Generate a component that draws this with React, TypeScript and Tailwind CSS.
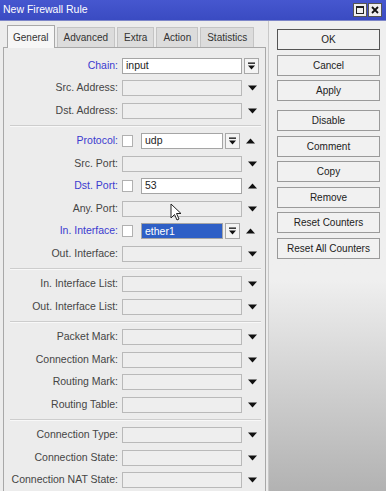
import React from 'react';

type Row = {
	label: string;
	blue?: boolean;
	check?: boolean;
	kind?: 'combo' | 'text' | 'empty' | 'chain';
	value?: string;
	selected?: boolean;
	up?: boolean;
};

const groups: Row[][] = [
	[
		{ label: 'Chain', blue: true, kind: 'chain', value: 'input' },
		{ label: 'Src. Address' },
		{ label: 'Dst. Address' },
	],
	[
		{ label: 'Protocol', blue: true, check: true, kind: 'combo', value: 'udp', up: true },
		{ label: 'Src. Port' },
		{ label: 'Dst. Port', blue: true, check: true, kind: 'text', value: '53', up: true },
		{ label: 'Any. Port' },
		{ label: 'In. Interface', blue: true, check: true, kind: 'combo', value: 'ether1', selected: true, up: true },
		{ label: 'Out. Interface' },
	],
	[{ label: 'In. Interface List' }, { label: 'Out. Interface List' }],
	[
		{ label: 'Packet Mark' },
		{ label: 'Connection Mark' },
		{ label: 'Routing Mark' },
		{ label: 'Routing Table' },
	],
	[{ label: 'Connection Type' }, { label: 'Connection State' }, { label: 'Connection NAT State' }],
];

const buttons = ['OK', 'Cancel', 'Apply', 'Disable', 'Comment', 'Copy', 'Remove', 'Reset Counters', 'Reset All Counters'];
const tabs = ['General', 'Advanced', 'Extra', 'Action', 'Statistics'];

const Arrow = ({ up }: { up?: boolean }) => (
	<svg width="9" height="6" viewBox="0 0 9 6" className="ml-[6px] shrink-0">
		{up ? <polygon points="0,5.5 9,5.5 4.5,0.5" fill="#111" /> : <polygon points="0,0.5 9,0.5 4.5,5.5" fill="#111" />}
	</svg>
);

const DropButton = ({ w }: { w: string }) => (
	<div className={`${w} h-4 ml-[2px] flex items-center justify-center border border-[#a8a8a8] bg-[#f4f4f4]`}>
		<svg width="7" height="8" viewBox="0 0 7 8">
			<rect x="0" y="0.5" width="7" height="1.3" fill="#111" />
			<polygon points="0,3.5 7,3.5 3.5,7.5" fill="#111" />
		</svg>
	</div>
);

const FieldRow = ({ row }: { row: Row }) => {
	const kind = row.kind ?? 'empty';
	return (
		<div className="flex items-center h-[22.5px]">
			<div className={`w-[114px] text-right text-[10.5px] whitespace-nowrap ${row.blue ? 'text-[#3b3bcf]' : 'text-[#454545]'}`}>
				{row.label}:
			</div>
			<div className="ml-[4px] flex items-center">
				{row.check && <div className="w-[11px] h-[12px] bg-white border border-[#b0b0b0] mr-[8px]" />}
				{kind === 'chain' && (
					<>
						<div className="w-[120px] h-4 bg-white border border-[#a5a5a5] flex items-center pl-[3px] text-[10.5px] text-[#222]">
							{row.value}
						</div>
						<DropButton w="w-[15px]" />
					</>
				)}
				{kind === 'combo' && (
					<>
						<div className="w-[82px] h-4 bg-white border border-[#a5a5a5] flex items-center text-[10.5px] text-[#222]">
							{row.selected ? (
								<div className="w-full h-full bg-[#2e5fc6] text-white pl-[3px] leading-[14px]">{row.value}</div>
							) : (
								<span className="pl-[3px]">{row.value}</span>
							)}
						</div>
						<DropButton w="w-[15px]" />
						<Arrow up />
					</>
				)}
				{kind === 'text' && (
					<>
						<div className="w-[101px] h-4 bg-white border border-[#a5a5a5] flex items-center pl-[3px] text-[10.5px] text-[#222]">
							{row.value}
						</div>
						<Arrow up />
					</>
				)}
				{kind === 'empty' && (
					<>
						<div className="w-[120px] h-4 bg-[#eeeeee] border border-[#b9b9b9]" />
						<Arrow />
					</>
				)}
			</div>
		</div>
	);
};

export default function App() {
	return (
		<div className="w-[386px] h-[491px] overflow-hidden flex flex-col bg-[#ececec] font-['Liberation_Sans',Arial,sans-serif]">
			{/* title bar */}
			<div className="h-[21px] shrink-0 flex items-center bg-linear-to-b from-[#4657cf] to-[#3a4bc2] border-b border-[#7d86c9]">
				<span className="pl-[3px] text-white text-[10.5px]">New Firewall Rule</span>
				<div className="ml-auto mr-[4px] flex gap-[1px]">
					<div className="w-[14px] h-[14px] bg-[#efefef] border border-[#555] flex items-center justify-center">
						<div className="w-[8px] h-[8px] border border-[#222] border-t-2" />
					</div>
					<div className="w-[14px] h-[14px] bg-[#efefef] border border-[#555] flex items-center justify-center">
						<svg width="8" height="8" viewBox="0 0 8 8">
							<path d="M1 1 L7 7 M7 1 L1 7" stroke="#111" strokeWidth="1.8" />
						</svg>
					</div>
				</div>
			</div>

			<div className="flex flex-1 relative">
				{/* left: tabs + panel */}
				<div className="w-[268px] pl-[3px] flex flex-col">
					<div className="flex items-end h-[26px] pl-[4px] gap-[2px]">
						{tabs.map((t, i) =>
							i === 0 ? (
								<div
									key={t}
									className="h-[23px] px-[5px] flex items-center bg-[#f6f6f6] border border-b-0 border-[#a8a8a8] text-[10px] text-[#333] -mb-px relative z-10"
								>
									{t}
								</div>
							) : (
								<div
									key={t}
									className="h-[20px] px-[6px] flex items-center bg-[#dcdcdc] border border-b-0 border-[#c4c4c4] text-[10px] text-[#333]"
								>
									{t}
								</div>
							),
						)}
					</div>
					<div className="flex-1 border-l border-t border-r border-[#a8a8a8] w-[263px] pt-[6.5px] bg-[#ececec]">
						{groups.map((g, gi) => (
							<div key={gi}>
								{gi > 0 && (
									<div className="h-2 flex items-center pl-[6px] pr-[4px]">
										<div className="w-full border-t border-[#cdcdcd] border-b border-b-[#f8f8f8]" />
									</div>
								)}
								{g.map((r) => (
									<FieldRow key={r.label} row={r} />
								))}
							</div>
						))}
					</div>
				</div>

				{/* right: buttons */}
				<div className="flex-1 pt-[8px] pl-[8px] bg-linear-to-b from-[#efefef] from-[55%] to-[#b2b2b2] border-l border-[#c8c8c8]">
					<div className="flex flex-col gap-[4.5px] w-[103px]">
						{buttons.map((b) => (
							<div
								key={b}
								className={`h-[21px] flex items-center justify-center bg-[#f1f1f1] text-[10px] text-[#222] border ${
									b === 'OK' ? 'border-[#555]' : 'border-[#9a9a9a]'
								} ${b === 'Disable' ? 'mt-[4.5px]' : ''}`}
							>
								{b}
							</div>
						))}
					</div>
				</div>

				{/* mouse cursor */}
				<svg className="absolute left-[170px] top-[182px]" width="12" height="19" viewBox="0 0 12 19">
					<path d="M1 1 L1 15 L4.5 11.5 L7 17 L9 16 L6.5 10.5 L11 10.5 Z" fill="#fff" stroke="#222" strokeWidth="1" />
				</svg>
			</div>
		</div>
	);
}
